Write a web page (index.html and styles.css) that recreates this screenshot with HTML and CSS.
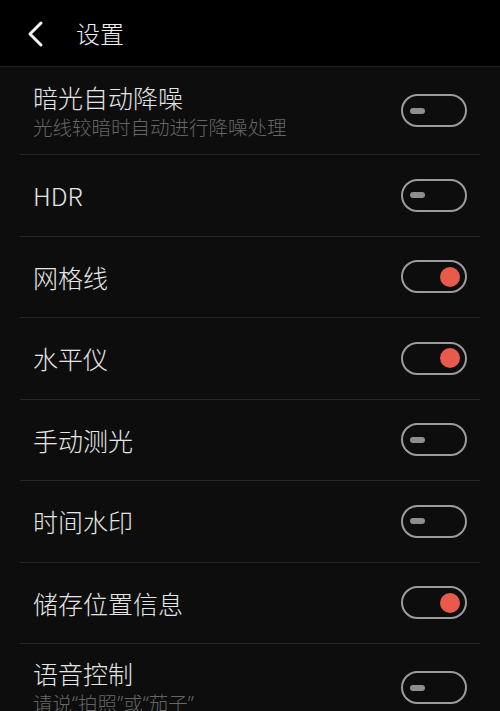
FILE: index.html
```html
<!DOCTYPE html>
<html lang="zh-CN">
<head>
<meta charset="utf-8">
<link rel="stylesheet" href="styles.css">
</head>
<body>
<div class="screen">
  <header class="topbar">
    <svg class="back" width="20" height="28" viewBox="0 0 20 28"><path d="M15 3 L4 14 L15 25" fill="none" stroke="#f2f2f2" stroke-width="3" stroke-linecap="round" stroke-linejoin="round"/></svg>
    <span class="title">设置</span>
  </header>
  <main class="list">
    <div class="row tall">
      <div class="text"><div class="label">暗光自动降噪</div><div class="sub">光线较暗时自动进行降噪处理</div></div>
      <span class="toggle"><span class="knob"></span></span>
    </div>
    <div class="row">
      <div class="text"><div class="label">HDR</div></div>
      <span class="toggle"><span class="knob"></span></span>
    </div>
    <div class="row">
      <div class="text"><div class="label">网格线</div></div>
      <span class="toggle on"><span class="knob"></span></span>
    </div>
    <div class="row">
      <div class="text"><div class="label">水平仪</div></div>
      <span class="toggle on"><span class="knob"></span></span>
    </div>
    <div class="row">
      <div class="text"><div class="label">手动测光</div></div>
      <span class="toggle"><span class="knob"></span></span>
    </div>
    <div class="row">
      <div class="text"><div class="label">时间水印</div></div>
      <span class="toggle"><span class="knob"></span></span>
    </div>
    <div class="row">
      <div class="text"><div class="label">储存位置信息</div></div>
      <span class="toggle on"><span class="knob"></span></span>
    </div>
    <div class="row tall">
      <div class="text"><div class="label">语音控制</div><div class="sub">请说<span class="q">“</span>拍照<span class="q">”</span>或<span class="q">“</span>茄子<span class="q">”</span></div></div>
      <span class="toggle"><span class="knob"></span></span>
    </div>
  </main>
</div>
</body>
</html>
```

FILE: styles.css
```css
html, body {
  margin: 0;
  padding: 0;
  background: #0d0d0d;
}
body {
  font-family: "Noto Sans CJK SC", "Noto Sans", sans-serif;
  color: #e6e6e6;
}
.screen {
  width: 500px;
  height: 711px;
  overflow: hidden;
  background: #0d0d0d;
}
.topbar {
  height: 66px;
  background: #000;
  border-bottom: 1px solid #1f1f1f;
  display: flex;
  align-items: center;
  padding-left: 26px;
  box-sizing: content-box;
}
.back {
  display: block;
  margin-top: 1px;
}
.title {
  margin-left: 30px;
  font-size: 24px;
  line-height: 1;
  font-weight: 300;
  color: #f0f0f0;
}
.list {
  display: flex;
  flex-direction: column;
}
.row {
  margin: 0 20px;
  padding: 0 13px;
  height: 81.5px;
  border-bottom: 1px solid #262626;
  display: flex;
  align-items: center;
  justify-content: space-between;
  box-sizing: border-box;
}
.row.tall {
  height: 88px;
}
.text {
  display: flex;
  flex-direction: column;
  gap: 4px;
}
.label {
  font-size: 25px;
  line-height: 28px;
  font-weight: 300;
  color: #e6e6e6;
}
.sub {
  font-size: 19.5px;
  line-height: 24px;
  font-weight: 300;
  color: #666;
}
.q {
  font-family: "Noto Sans", sans-serif;
}
.toggle {
  width: 66px;
  height: 33px;
  border: 2px solid #9c9c9c;
  border-radius: 17px;
  box-sizing: border-box;
  display: flex;
  align-items: center;
  padding-left: 7px;
}
.knob {
  width: 15px;
  height: 6px;
  border-radius: 3px;
  background: #8e8e8e;
}
.toggle.on {
  justify-content: flex-end;
  padding-left: 0;
  padding-right: 5px;
}
.toggle.on .knob {
  width: 20px;
  height: 20px;
  border-radius: 50%;
  background: #e85a4c;
}
```
